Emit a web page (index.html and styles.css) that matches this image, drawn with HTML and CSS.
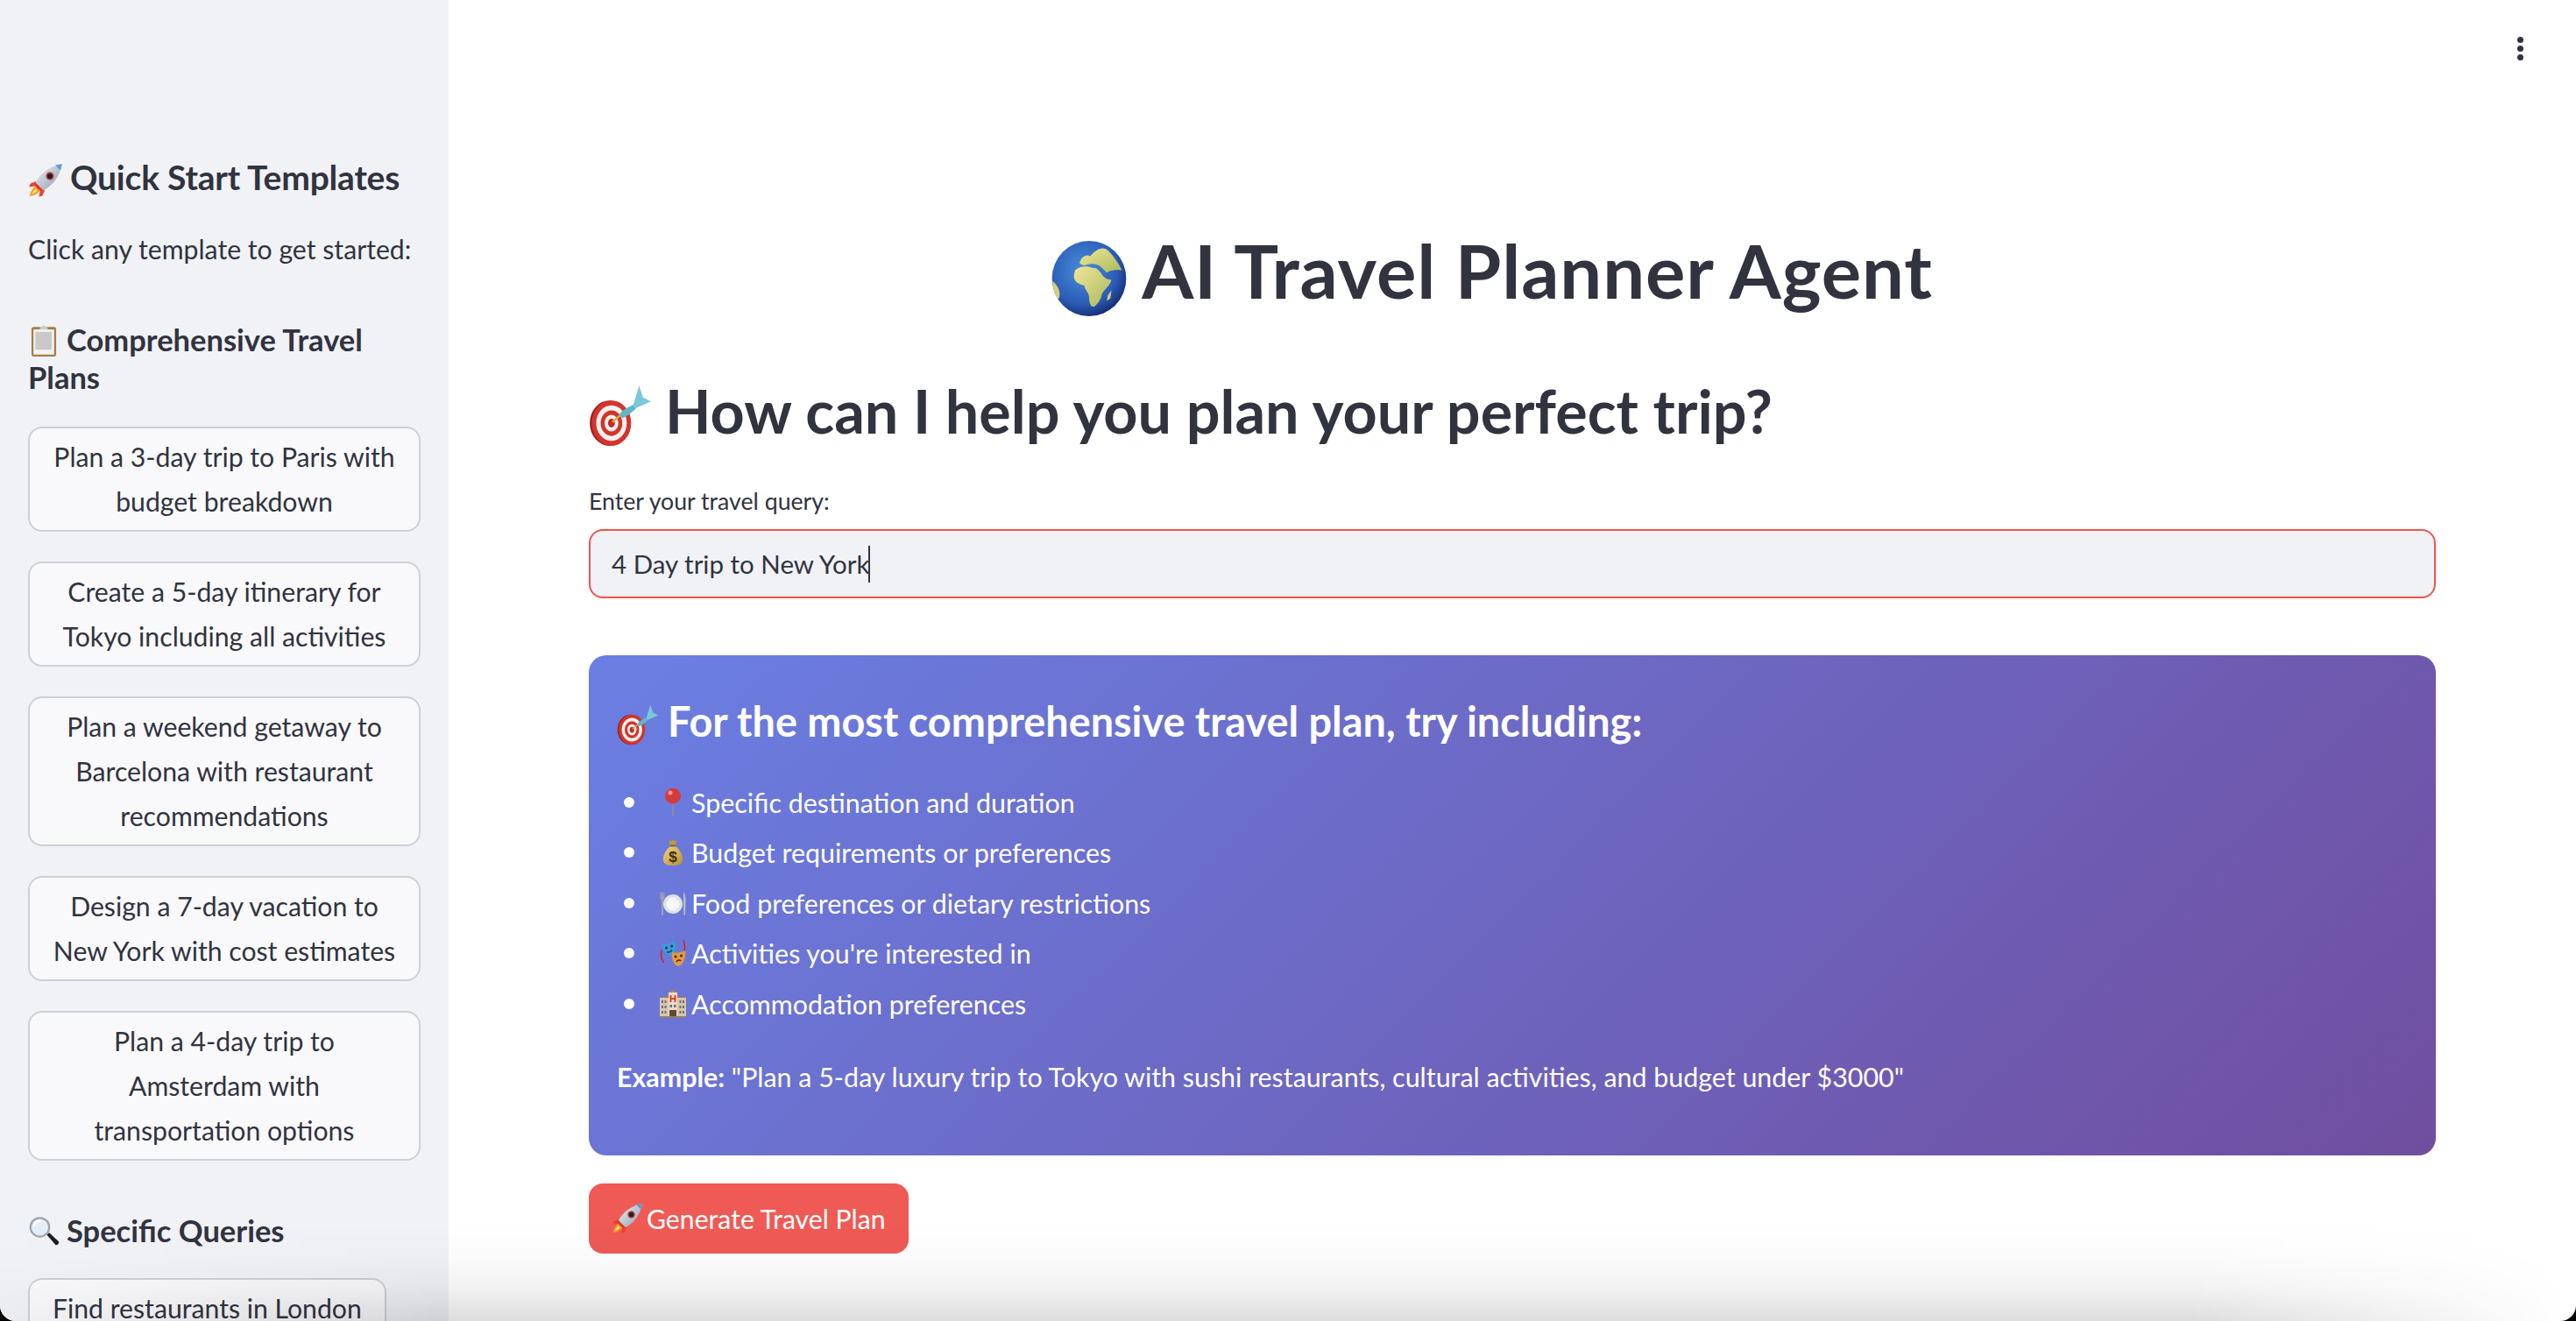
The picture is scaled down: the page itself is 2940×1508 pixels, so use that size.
FILE: index.html
```html
<!DOCTYPE html>
<html lang="en">
<head>
<meta charset="utf-8">
<title>AI Travel Planner Agent</title>
<link rel="stylesheet" href="styles.css">
</head>
<body>
<svg class="defs" aria-hidden="true">
  <defs>
    <radialGradient id="sea" cx="42%" cy="38%" r="66%"><stop offset="0" stop-color="#4a8fdc"/><stop offset=".7" stop-color="#2a5cb6"/><stop offset="1" stop-color="#14296e"/></radialGradient>
    <linearGradient id="land" x1="0" y1="0" x2="1" y2="1"><stop offset="0" stop-color="#f0e79a"/><stop offset="1" stop-color="#a9b85a"/></linearGradient>
    <linearGradient id="hull" x1="0" y1="0" x2="1" y2="1"><stop offset="0" stop-color="#eef2f6"/><stop offset="1" stop-color="#8b9bb0"/></linearGradient>
    <linearGradient id="sack" x1="0" y1="0" x2="1" y2="1"><stop offset="0" stop-color="#ecd27f"/><stop offset="1" stop-color="#b98f3c"/></linearGradient>
  </defs>
  <symbol id="e-rocket" viewBox="0 0 64 64">
    <path d="M15 33 L4 38 L2 44 L13 42 Z" fill="#e8432e"/>
    <path d="M31 49 L26 60 L20 62 L22 51 Z" fill="#e8432e"/>
    <path d="M14 42 C8 46 4 54 3 61 C10 60 18 56 22 50 Z" fill="#f39a2b"/>
    <path d="M14 47 C10 50 8 54 7 57 C10 56 14 54 17 50 Z" fill="#fbe56a"/>
    <path d="M14 36 C22 20 38 6 62 2 C58 26 44 42 28 50 Z" fill="url(#hull)"/>
    <path d="M50 4 C54 3 58 2 62 2 C61 6 60 10 59 14 C56 10 53 7 50 4 Z" fill="#5b9bd8"/>
    <circle cx="40" cy="24" r="7.5" fill="#c9453a"/>
    <circle cx="40" cy="24" r="5" fill="#1d2230"/>
    <path d="M14 36 L28 50 L23 52 L12 41 Z" fill="#d9392a"/>
  </symbol>
  <symbol id="e-globe" viewBox="0 0 64 64">
    <ellipse cx="32" cy="32" rx="31.5" ry="32" fill="url(#sea)"/>
    <path d="M20 25 C24 21 31 21 35 23 C38 22 40 25 42 27 C44 31 47 33 51 33 C50 38 45 41 43 45 C42 50 39 54 36 56 C33 56 32 52 32 47 C31 43 28 41 28 38 C24 37 19 35 19 30 Z" fill="url(#land)"/>
    <path d="M24 18 C26 13 30 11 33 13 C37 8 43 4 48 8 C53 13 57 19 60 25 C55 24 50 25 47 27 C44 24 41 20 38 20 C34 19 30 20 28 21 C26 20 24 20 24 18 Z" fill="url(#land)"/>
    <path d="M1 34 C4 37 7 40 7 46 C7 48 6 50 5 49 C3 45 1 40 1 34 Z" fill="#d8cf78"/>
    <path d="M48 46 L51 42 L50 49 L47 51 Z" fill="#d8cf78"/>
  </symbol>
  <symbol id="e-target" viewBox="0 0 64 64">
    <ellipse cx="21" cy="40" rx="20" ry="23" fill="#9c1f1c"/>
    <ellipse cx="23" cy="40" rx="20" ry="23" fill="#d2352c"/>
    <ellipse cx="23" cy="40" rx="15.5" ry="18" fill="#f4f1ee"/>
    <ellipse cx="23" cy="40" rx="11" ry="13" fill="#d2352c"/>
    <ellipse cx="23" cy="40" rx="7" ry="8.5" fill="#f4f1ee"/>
    <ellipse cx="23" cy="40" rx="3.5" ry="4.5" fill="#c62a24"/>
    <path d="M24 39 L33 31" stroke="#d9b13a" stroke-width="2"/>
    <path d="M31 31 C35 26 41 23 46 21 L48 25 C44 29 39 33 34 35 Z" fill="#5fb6c9"/>
    <path d="M45 22 L51 2 L55 14 L63 18 L47 25 Z" fill="#79c9d8"/>
  </symbol>
  <symbol id="e-clip" viewBox="0 0 64 64">
    <rect x="7" y="4" width="50" height="60" rx="4" fill="#a87c45"/>
    <rect x="11" y="9" width="42" height="51" fill="#f2f2f0"/>
    <rect x="15" y="14" width="33" height="36" fill="#c9c9c9"/>
    <path d="M24 7 C24 3 28 3 30 3 C30 0 34 0 34 3 C36 3 40 3 40 7 L40 9 L24 9 Z" fill="#c4cbd3"/>
  </symbol>
  <symbol id="e-search" viewBox="0 0 64 64">
    <path d="M38 38 L43 34 L62 52 C64 55 60 60 56 59 Z" fill="#1d1d22"/>
    <circle cx="24" cy="23" r="21" fill="#9da4ad"/>
    <circle cx="24" cy="23" r="17" fill="#e4eef6"/>
    <path d="M12 21 C13 14 19 10 26 10" fill="none" stroke="#fff" stroke-width="4"/>
  </symbol>
  <symbol id="e-pin" viewBox="0 0 64 64">
    <rect x="30.5" y="28" width="3.5" height="36" rx="1.5" fill="#8f8f8f"/>
    <circle cx="32" cy="17" r="18" fill="#d63a3c"/>
    <circle cx="26" cy="10" r="5" fill="#f09c9a"/>
  </symbol>
  <symbol id="e-plate" viewBox="0 0 64 64">
    <circle cx="32" cy="34" r="22" fill="#dfe3e8"/>
    <circle cx="32" cy="34" r="15" fill="#f6f7f9"/>
    <path d="M3 6 L3 20 C3 24 5 25 6 25 L6 60 L10 60 L10 25 C11 25 13 24 13 20 L13 6 L11.5 6 L11 17 L9.5 6 L7 6 L6.5 17 L5 6 Z" fill="#9aa3ad"/>
    <path d="M56 6 C60 10 62 20 61 34 L60 60 L57 60 L56 34 Z" fill="#b6bdc5"/>
  </symbol>
  <symbol id="e-masks" viewBox="0 0 64 64">
    <path d="M7 25 C4 34 5 46 11 54" fill="none" stroke="#c8241e" stroke-width="3"/>
    <path d="M56 2 C60 14 60 26 56 36" fill="none" stroke="#c8241e" stroke-width="3"/>
    <path d="M6 10 C16 15 26 12 34 4 C42 14 42 32 30 38 C20 42 8 30 6 10 Z" fill="#3f9ad8"/>
    <circle cx="17" cy="20" r="3" fill="#123a66"/><circle cx="29" cy="16" r="3" fill="#123a66"/>
    <path d="M18 29 C22 31 27 29 30 25" fill="none" stroke="#123a66" stroke-width="3"/>
    <path d="M30 30 C38 33 50 31 60 26 C62 42 56 60 44 62 C34 60 28 46 30 30 Z" fill="#e39b3f"/>
    <circle cx="38" cy="40" r="3" fill="#4a2b10"/><circle cx="51" cy="38" r="3" fill="#4a2b10"/>
    <path d="M40 52 C43 47 48 47 50 50" fill="none" stroke="#4a2b10" stroke-width="3"/>
  </symbol>
  <symbol id="e-hotel" viewBox="0 0 64 64">
    <rect x="2" y="18" width="60" height="44" fill="#dcc6a8"/>
    <rect x="22" y="6" width="20" height="56" fill="#eedcc2"/>
    <path d="M22 6 L32 0 L42 6 Z" fill="#b5845a"/>
    <path d="M2 18 L22 14 L22 18 Z M42 14 L62 18 L42 18 Z" fill="#a9764e"/>
    <path d="M27 12 V28 M37 12 V28 M27 20 H37" stroke="#d2322c" stroke-width="3.5" fill="none"/>
    <path d="M6 24 h4 v6 h-4 z M13 24 h4 v6 h-4 z M47 24 h4 v6 h-4 z M54 24 h4 v6 h-4 z M6 36 h4 v6 h-4 z M13 36 h4 v6 h-4 z M47 36 h4 v6 h-4 z M54 36 h4 v6 h-4 z M6 48 h4 v6 h-4 z M13 48 h4 v6 h-4 z M47 48 h4 v6 h-4 z M54 48 h4 v6 h-4 z M25 34 h5 v6 h-5 z M34 34 h5 v6 h-5 z" fill="#5d7388"/>
    <rect x="24" y="46" width="16" height="16" fill="#5f4a3a"/>
    <rect x="2" y="60" width="60" height="4" fill="#8e7f70"/>
  </symbol>
</svg>

<div class="app">
  <aside class="sidebar">
    <h3 class="side-title"><svg class="emoji e-title"><use href="#e-rocket"/></svg>Quick Start Templates</h3>
    <p class="side-intro">Click any template to get started:</p>
    <h4 class="side-head side-head-first"><svg class="emoji e-head"><use href="#e-clip"/></svg>Comprehensive Travel<br>Plans</h4>
    <div class="templates">
      <button class="tpl">Plan a 3-day trip to Paris with<br>budget breakdown</button>
      <button class="tpl">Create a 5-day itinerary for<br>Tokyo including all activities</button>
      <button class="tpl">Plan a weekend getaway to<br>Barcelona with restaurant<br>recommendations</button>
      <button class="tpl">Design a 7-day vacation to<br>New York with cost estimates</button>
      <button class="tpl">Plan a 4-day trip to<br>Amsterdam with<br>transportation options</button>
    </div>
    <h4 class="side-head side-head-next"><svg class="emoji e-head"><use href="#e-search"/></svg>Specific Queries</h4>
    <button class="tpl tpl-query">Find restaurants in London</button>
  </aside>

  <main class="main">
    <h1 class="title"><svg class="emoji e-globe"><use href="#e-globe"/></svg>AI Travel Planner Agent</h1>
    <h2 class="subtitle"><svg class="emoji e-target"><use href="#e-target"/></svg>How can I help you plan your perfect trip?</h2>
    <label class="label">Enter your travel query:</label>
    <div class="input"><span>4 Day trip to New York</span><span class="caret"></span></div>
    <section class="card">
      <h3 class="card-title"><svg class="emoji e-card"><use href="#e-target"/></svg>For the most comprehensive travel plan, try including:</h3>
      <ul class="tips">
        <li><svg class="emoji e-li"><use href="#e-pin"/></svg>Specific destination and duration</li>
        <li><svg class="emoji e-li" viewBox="0 0 64 64"><path d="M24 3 L28 7 L32 3 L36 7 L41 3 L39 16 L25 16 Z" fill="#c09a48"/><rect x="25" y="15" width="14" height="4" rx="2" fill="#7c5e25"/><path d="M25 19 C14 28 9 40 10 50 C11 59 18 62 32 62 C46 62 53 59 54 50 C55 40 50 28 39 19 Z" fill="url(#sack)"/><text x="32" y="54" text-anchor="middle" class="dollar">$</text></svg>Budget requirements or preferences</li>
        <li><svg class="emoji e-li"><use href="#e-plate"/></svg>Food preferences or dietary restrictions</li>
        <li><svg class="emoji e-li"><use href="#e-masks"/></svg>Activities you're interested in</li>
        <li><svg class="emoji e-li"><use href="#e-hotel"/></svg>Accommodation preferences</li>
      </ul>
      <p class="example"><strong>Example:</strong> "Plan a 5-day luxury trip to Tokyo with sushi restaurants, cultural activities, and budget under $3000"</p>
    </section>
    <button class="generate"><svg class="emoji e-btn"><use href="#e-rocket"/></svg>Generate Travel Plan</button>
  </main>

  <div class="kebab"><i></i><i></i><i></i></div>
  <div class="vignette"></div>
</div>
</body>
</html>
```
FILE: styles.css
```css
* { box-sizing: border-box; }
html, body { margin: 0; height: 100%; background: #000; }
body { font-family: "Lato", "Noto Sans", sans-serif; color: #31333f; overflow: hidden; }
.defs { position: absolute; width: 0; height: 0; }
.dollar { font: 700 34px "Liberation Sans", sans-serif; fill: #3a2c10; }

.app { position: relative; display: flex; height: 100vh; background: #fff; border-radius: 0 0 18px 18px; overflow: hidden; }

.emoji { display: inline-block; flex: none; vertical-align: middle; margin-top: -30px; margin-bottom: -30px; }
.e-title { width: 40px; height: 40px; margin-right: 8px; position: relative; top: -1px; }
.e-head { width: 36px; height: 36px; margin-right: 8px; position: relative; top: -3px; }
.e-globe { width: 86px; height: 86px; margin-right: 17px; position: relative; top: -1px; }
.e-target { width: 72px; height: 72px; margin-right: 15px; position: relative; top: -3px; }
.e-card { width: 48px; height: 48px; margin-right: 10px; position: relative; top: -2px; }
.e-li { width: 32px; height: 32px; margin: 0 5px 0 0; }
.e-btn { width: 36px; height: 36px; margin: 0 4px 0 0; }

.sidebar { flex: none; width: 512px; height: 100%; overflow: hidden; background: #f0f2f6; padding: 174px 32px 0; display: flex; flex-direction: column; align-items: flex-start; }
.side-title { margin: 0; font-size: 39px; line-height: 56px; font-weight: 700; white-space: nowrap; letter-spacing: -0.2px; }
.side-intro { margin: 29px 0 0; font-size: 30.2px; line-height: 51px; white-space: nowrap; }
.side-head { margin: 0; font-size: 34.5px; line-height: 43px; font-weight: 700; }
.side-head-first { margin-top: 56px; }
.side-head-next { margin-top: 58px; white-space: nowrap; }
.templates { margin-top: 35px; width: 448px; display: flex; flex-direction: column; gap: 34px; }
.tpl { display: block; width: 100%; padding: 7px 8px; border: 2px solid #cfd0d6; border-radius: 16px; background: #f9f9fb; color: #31333f; font: 400 30.2px/51px "Lato", "Noto Sans", sans-serif; text-align: center; white-space: nowrap; }
.tpl-query { width: auto; flex: none; margin-top: 33px; padding: 7px 26px; }

.main { flex: 1; min-width: 0; padding: 258px 160px 0; }
.title { margin: 0; padding-right: 46px; font-size: 85px; line-height: 100px; font-weight: 700; text-align: center; white-space: nowrap; letter-spacing: 0.9px; }
.subtitle { margin: 66px 0 0; font-size: 68.3px; line-height: 90px; font-weight: 700; white-space: nowrap; }
.label { display: block; margin-top: 38px; font-size: 26.7px; line-height: 40px; }
.input { display: flex; align-items: center; height: 79px; margin-top: 12px; padding: 0 24px; border: 2px solid #ef5350; border-radius: 16px; background: #f0f2f6; font-size: 29.5px; white-space: nowrap; }
.caret { width: 2px; height: 42px; background: #31333f; margin-left: -1px; }

.card { margin-top: 65px; padding: 45px 32px 64px; border-radius: 20px; background: linear-gradient(135deg, #6a7fe3 0%, #704e9f 100%); color: #fff; }
.card-title { margin: 0; font-size: 46.8px; line-height: 60px; font-weight: 700; white-space: nowrap; }
.tips { list-style: none; margin: 34px 0 0; padding: 0; }
.tips li { display: flex; align-items: center; height: 57.5px; font-size: 30.4px; }
.tips li::before { content: ""; flex: none; width: 12px; height: 12px; margin: 0 28px 0 8px; border-radius: 50%; background: #fff; }
.example { margin: 29px 0 0; font-size: 30.4px; line-height: 51px; white-space: nowrap; }
.example strong { font-weight: 700; }

.generate { display: flex; align-items: center; height: 80px; margin-top: 32px; padding: 0 26px; border: 0; border-radius: 16px; background: #ef5a55; color: #fff; font: 400 30.2px "Lato", "Noto Sans", sans-serif; white-space: nowrap; }

.kebab { position: absolute; top: 42px; right: 60px; display: flex; flex-direction: column; gap: 3px; }
.kebab i { display: block; width: 7px; height: 7px; border-radius: 50%; background: #31333f; }

.vignette { position: absolute; left: 0; right: 0; bottom: 0; height: 110px; pointer-events: none;
  background: linear-gradient(to bottom, rgba(0,0,0,0) 0%, rgba(0,0,0,.015) 35%, rgba(0,0,0,.05) 65%, rgba(0,0,0,.135) 100%);
  -webkit-mask-image: linear-gradient(to right, rgba(0,0,0,.2) 0, #000 500px, #000 2500px, transparent 2930px);
  mask-image: linear-gradient(to right, rgba(0,0,0,.2) 0, #000 500px, #000 2500px, transparent 2930px); }
```
